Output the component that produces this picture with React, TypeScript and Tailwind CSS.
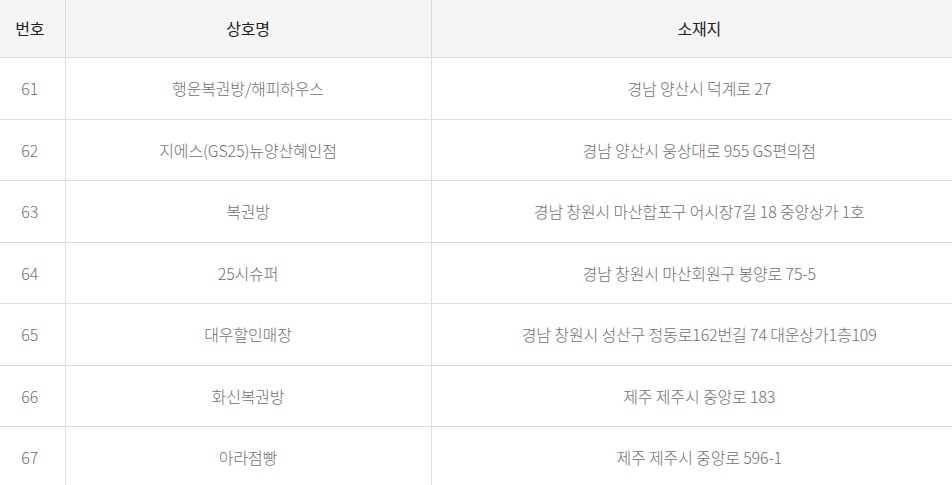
import React from "react";

const rows = [
  { no: 61, name: "행운복권방/해피하우스", addr: "경남 양산시 덕계로 27" },
  { no: 62, name: "지에스(GS25)뉴양산혜인점", addr: "경남 양산시 웅상대로 955 GS편의점" },
  { no: 63, name: "복권방", addr: "경남 창원시 마산합포구 어시장7길 18 중앙상가 1호" },
  { no: 64, name: "25시슈퍼", addr: "경남 창원시 마산회원구 봉양로 75-5" },
  { no: 65, name: "대우할인매장", addr: "경남 창원시 성산구 정동로162번길 74 대운상가1층109" },
  { no: 66, name: "화신복권방", addr: "제주 제주시 중앙로 183" },
  { no: 67, name: "아라점빵", addr: "제주 제주시 중앙로 596-1" },
];

export default function App() {
  return (
    <div
      className="w-[952px] h-[485px] overflow-hidden bg-white"
      style={{ fontFamily: '"Noto Sans CJK KR", "Noto Sans", sans-serif' }}
    >
      <table className="w-[972px] -ml-[5px] border-collapse table-fixed text-[16px] tracking-[-0.15px]">
        <colgroup>
          <col className="w-[70px]" />
          <col className="w-[366px]" />
          <col />
        </colgroup>
        <thead>
          <tr className="h-[57px] bg-[#f4f4f4] text-[#222]">
            <th className="font-normal border-b border-r border-[#dddddd]">번호</th>
            <th className="font-normal border-b border-r border-[#dddddd]">상호명</th>
            <th className="font-normal border-b border-[#dddddd]">소재지</th>
          </tr>
        </thead>
        <tbody className="text-[#6f6f6f] font-light">
          {rows.map((r, i) => (
            <tr key={r.no} className={i % 2 === 0 ? "h-[62px]" : "h-[61px]"}>
              <td className="text-center border-b border-r border-[#dddddd]">{r.no}</td>
              <td className="text-center border-b border-r border-[#dddddd]">{r.name}</td>
              <td className="text-center border-b border-[#dddddd]">{r.addr}</td>
            </tr>
          ))}
        </tbody>
      </table>
    </div>
  );
}
